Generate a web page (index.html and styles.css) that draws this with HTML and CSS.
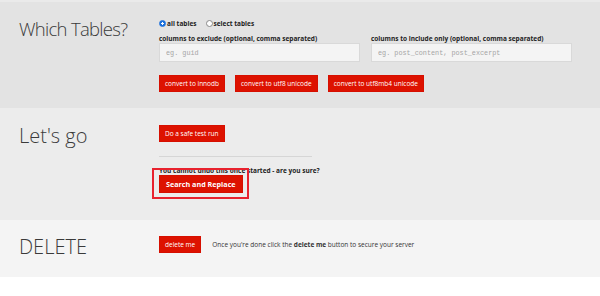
FILE: index.html
```html
<!DOCTYPE html>
<html lang="en">
<head>
    <meta charset="UTF-8">
    <meta name="viewport" content="width=device-width, initial-scale=1.0">
    <title>Search Replace DB</title>
    <link rel="stylesheet" href="styles.css">
</head>
<body>
    <!-- Tables -->
    <div class="section section-tables">
        <h2 class="tight">Which Tables?</h2>
        <div class="content">
            <div class="radios">
                <label class="radio"><input type="radio" name="tables" checked> all tables</label>
                <label class="radio"><input type="radio" name="tables"> select tables</label>
            </div>
            <div class="fields">
                <div class="field">
                    <label for="exclude">columns to exclude (optional, comma separated)</label>
                    <input type="text" id="exclude" placeholder="eg. guid">
                </div>
                <div class="field">
                    <label for="include">columns to include only (optional, comma separated)</label>
                    <input type="text" id="include" placeholder="eg. post_content, post_excerpt">
                </div>
            </div>
            <div class="buttons">
                <button class="btn">convert to innodb</button>
                <button class="btn">convert to utf8 unicode</button>
                <button class="btn">convert to utf8mb4 unicode</button>
            </div>
        </div>
    </div>

    <!-- Run -->
    <div class="section section-go">
        <h2>Let's go</h2>
        <div class="content">
            <button class="btn">Do a safe test run</button>
            <hr>
            <p class="warning">You cannot undo this once started - are you sure?</p>
            <div class="live">
                <button class="btn btn-big">Search and Replace</button>
                <span class="highlight"></span>
            </div>
        </div>
    </div>

    <!-- Delete -->
    <div class="section section-delete">
        <h2>DELETE</h2>
        <div class="content delete-row">
            <button class="btn">delete me</button>
            <p class="note">Once you're done click the <strong>delete me</strong> button to secure your server</p>
        </div>
    </div>
</body>
</html>
```

FILE: styles.css
```css
/* General */
body {
    margin: 0;
    background: #fff;
    font-family: 'Open Sans', Arial, sans-serif;
    color: #333;
}

.section {
    display: grid;
    grid-template-columns: 140px 1fr;
    padding: 0 28px 0 19px;
}

.section h2 {
    margin: 0;
    height: 17px;
    font-size: 20px;
    line-height: 22px;
    font-weight: 300;
    color: #3a3a3a;
}

.section h2.tight {
    font-size: 18.5px;
    letter-spacing: -0.7px;
}

.section-tables {
    background: #e3e3e3;
    border-top: 2px solid #eaeaea;
    padding-top: 16px;
    padding-bottom: 16px;
}

.section-go {
    background: #ececec;
    padding-top: 17px;
    padding-bottom: 27px;
}

.section-delete {
    background: #f4f4f4;
    padding-top: 16px;
    padding-bottom: 24px;
}

/* Radios */
.radios {
    display: flex;
    gap: 9px;
    height: 10px;
    align-items: center;
}

.radio {
    display: flex;
    align-items: center;
    gap: 1px;
    font-size: 6.5px;
    font-weight: 700;
    color: #222;
}

.radio input {
    appearance: none;
    margin: 0;
    width: 7px;
    height: 7px;
    border: 1px solid #8a8a8a;
    border-radius: 50%;
    background: #fff;
    box-sizing: border-box;
}

.radio input:checked {
    border-color: #1a6fdc;
    background: radial-gradient(circle, #fff 0 1px, #1a6fdc 1.4px);
}

/* Inputs */
.fields {
    display: flex;
    gap: 11px;
    margin-top: 7px;
}

.field {
    flex: 1;
}

.field label {
    display: block;
    font-size: 6.5px;
    line-height: 8px;
    font-weight: 700;
    color: #222;
    white-space: nowrap;
}

.field input {
    display: block;
    width: 100%;
    height: 19px;
    box-sizing: border-box;
    margin: 0;
    padding: 0 6px;
    border: 1px solid #d9d9d9;
    background: #f4f4f4;
    font-family: 'Liberation Mono', monospace;
    font-size: 6.8px;
    outline: none;
}

.field input::placeholder {
    color: #a5a5a5;
}

/* Buttons */
.buttons {
    display: flex;
    gap: 10px;
    margin-top: 13px;
}

.btn {
    height: 17px;
    padding: 0 5px;
    border: 1px solid #d60f00;
    background: #dd1200;
    color: #fff;
    font-family: 'Open Sans', Arial, sans-serif;
    font-size: 6.5px;
    cursor: pointer;
}

.btn-big {
    height: 18px;
    padding: 0 6px;
    font-size: 7.2px;
    font-weight: 700;
}

.section-go .content {
    display: flex;
    flex-direction: column;
    align-items: flex-start;
}

.section-go hr {
    width: 153px;
    margin: 14px 0 0;
    border: 0;
    border-top: 1px solid #d6d6d6;
}

.warning {
    margin: 10px 0 0;
    font-size: 6.5px;
    line-height: 8px;
    font-weight: 700;
    color: #222;
}

.live {
    position: relative;
    display: flex;
}

/* annotation box around the live run button */
.highlight {
    position: absolute;
    top: -7px;
    left: -7px;
    right: -6px;
    bottom: -6px;
    border: 2px solid #e8222e;
}

/* Delete */
.delete-row {
    display: flex;
    align-items: center;
    gap: 11px;
    height: 17px;
}

.note {
    margin: 0;
    font-size: 6.5px;
    color: #333;
}
```
